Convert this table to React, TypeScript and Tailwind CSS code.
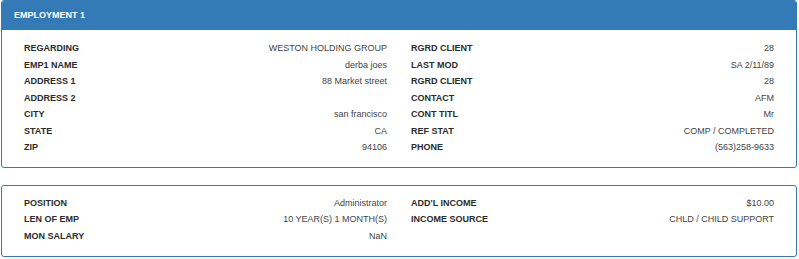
const employer: [string, string][] = [
  ["REGARDING", "WESTON HOLDING GROUP"],
  ["EMP1 NAME", "derba joes"],
  ["ADDRESS 1", "88 Market street"],
  ["ADDRESS 2", ""],
  ["CITY", "san francisco"],
  ["STATE", "CA"],
  ["ZIP", "94106"],
];

const client: [string, string][] = [
  ["RGRD CLIENT", "28"],
  ["LAST MOD", "SA 2/11/89"],
  ["RGRD CLIENT", "28"],
  ["CONTACT", "AFM"],
  ["CONT TITL", "Mr"],
  ["REF STAT", "COMP / COMPLETED"],
  ["PHONE", "(563)258-9633"],
];

const job: [string, string][] = [
  ["POSITION", "Administrator"],
  ["LEN OF EMP", "10 YEAR(S) 1 MONTH(S)"],
  ["MON SALARY", "NaN"],
];

const income: [string, string][] = [
  ["ADD'L INCOME", "$10.00"],
  ["INCOME SOURCE", "CHLD / CHILD SUPPORT"],
];

function Rows({ items }: { items: [string, string][] }) {
  return (
    <div>
      {items.map(([label, value], i) => (
        <div key={i} className="flex justify-between h-[16.5px] leading-[16.5px]">
          <span className="font-bold text-[#2b2b2b]">{label}</span>
          <span className="text-[#444]">{value}</span>
        </div>
      ))}
    </div>
  );
}

export default function App() {
  return (
    <div className="bg-white w-[799px] h-[259px] pl-[1px] pr-[2px] text-[9px] font-['Liberation_Sans',Arial,sans-serif]">
      {/* Employment panel */}
      <div className="border border-[#337ab7] rounded-[3px] overflow-hidden">
        <div className="bg-[#337ab7] h-[29px] pt-[1px] px-[12px] flex items-center text-white font-bold">
          EMPLOYMENT 1
        </div>
        <div className="grid grid-cols-2 gap-[24px] pl-[22px] pr-[22px] pt-[10px] pb-[11px]">
          <Rows items={employer} />
          <Rows items={client} />
        </div>
      </div>

      {/* Position / income panel */}
      <div className="mt-[17px] border border-[#337ab7] rounded-[3px]">
        <div className="grid grid-cols-2 gap-[24px] pl-[22px] pr-[22px] pt-[9px] pb-[12px]">
          <Rows items={job} />
          <Rows items={income} />
        </div>
      </div>
    </div>
  );
}
